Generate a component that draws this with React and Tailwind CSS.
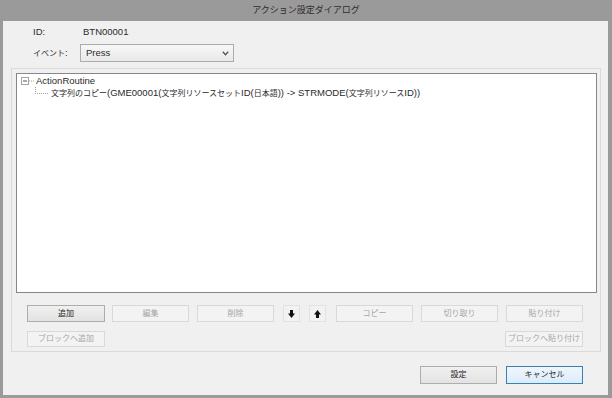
import React from "react";

const CJK = /([\u3000-\u30ff\u4e00-\u9fff\uff00-\uffef]+)/;

// mixed Latin / Japanese text: kana and kanji a touch smaller, as in the dialog font
function T({ s, j = "text-[8px]" }) {
  return s.split(CJK).map((p, i) =>
    CJK.test(p) ? (
      <span key={i} className={j}>
        {p}
      </span>
    ) : (
      <React.Fragment key={i}>{p}</React.Fragment>
    )
  );
}

function Btn({ label, w = "w-[77px]", h = "h-[17px]", enabled, className = "" }) {
  return (
    <div
      className={`${w} ${h} flex items-center justify-center border leading-none ${
        enabled
          ? "border-[#adadad] bg-gradient-to-b from-[#f0f0f0] to-[#e3e3e3] text-[#222]"
          : "border-[#d9d9d9] bg-[#f3f3f3] text-[#a6a6a6]"
      } ${className}`}
    >
      <T s={label} />
    </div>
  );
}

function ArrowBtn({ up, className = "" }) {
  return (
    <div className={`w-[17px] h-[17px] flex items-center justify-center border border-[#e2e2e2] bg-[#f2f2f2] ${className}`}>
      <svg width="7" height="8" viewBox="0 0 7 8" className={up ? "rotate-180" : ""}>
        <rect x="2" y="0" width="3" height="4" fill="#111" />
        <path d="M0 3.5 H7 L3.5 8 Z" fill="#111" />
      </svg>
    </div>
  );
}

export default function App() {
  return (
    <div className="w-[612px] h-[398px] bg-[#9a9a9a] flex flex-col overflow-hidden font-['Liberation_Sans','Noto_Sans_CJK_JP',sans-serif] text-[9.5px] text-[#2a2a2a]">
      {/* Title bar */}
      <div className="h-[21px] flex items-center justify-center text-[#2e2e2e]">
        <span className="text-[9px]">アクション設定ダイアログ</span>
      </div>

      <div className="flex-1 ml-[3px] mr-[4px] mb-[3px] bg-[#f0f0f0] flex flex-col pt-[3px]">
        {/* ID */}
        <div className="h-[16px] flex items-center pl-[30px]">
          <span className="w-[50px]">ID:</span>
          <span>BTN00001</span>
        </div>

        {/* Event */}
        <div className="h-[18px] mt-[4px] flex items-center pl-[30px]">
          <span className="w-[47px]">
            <T s="イベント:" />
          </span>
          <div className="w-[154px] h-[18px] border border-[#acacac] bg-gradient-to-b from-[#f7f7f7] to-[#e9e9e9] flex items-center justify-between pl-[5px] pr-[4px]">
            <span>Press</span>
            <svg width="7" height="5" viewBox="0 0 7 5">
              <path d="M0.8 0.8 L3.5 3.8 L6.2 0.8" fill="none" stroke="#555" strokeWidth="1.3" />
            </svg>
          </div>
        </div>

        {/* Routine panel */}
        <div className="mt-[6px] ml-[8px] w-[590px] border border-[#dadada] p-[4px] pb-[4px]">
          <div className="w-[581px] h-[220px] bg-white border border-[#828790] pl-[4px] pt-[1px]">
            <div className="h-[12px] flex items-center">
              <svg width="14" height="12" viewBox="0 0 14 12">
                <rect x="0.5" y="2.5" width="7" height="7" fill="#fff" stroke="#a5a5a5" />
                <path d="M2 6 H6" stroke="#555" />
                <path d="M8 6 H13" stroke="#a0a0a0" strokeDasharray="1 1" />
              </svg>
              <span className="ml-[1px]">ActionRoutine</span>
            </div>
            <div className="h-[12px] flex items-center pl-[13px]">
              <svg width="16" height="12" viewBox="0 0 16 12">
                <path d="M1.5 0 V6.5 H15" fill="none" stroke="#a0a0a0" strokeDasharray="1 1" />
              </svg>
              <span className="ml-[1px]">
                <T s="文字列のコピー(GME00001(文字列リソースセットID(日本語)) -> STRMODE(文字列リソースID))" />
              </span>
            </div>
          </div>

          <div className="w-[556px] ml-[11px] mt-[12px] flex items-center">
            <Btn label="追加" w="w-[78px]" enabled />
            <Btn label="編集" className="ml-[7px]" />
            <Btn label="削除" className="ml-[8px]" />
            <ArrowBtn className="ml-[9px]" />
            <ArrowBtn up className="ml-[9px]" />
            <Btn label="コピー" className="ml-[10px]" />
            <Btn label="切り取り" className="ml-[8px]" />
            <Btn label="貼り付け" className="ml-[8px]" />
          </div>
          <div className="w-[556px] ml-[11px] mt-[9px] flex items-center justify-between">
            <Btn label="ブロックへ追加" w="w-[78px]" h="h-[16px]" />
            <Btn label="ブロックへ貼り付け" w="w-[78px]" h="h-[16px]" />
          </div>
        </div>

        {/* Dialog buttons */}
        <div className="mt-[14px] flex justify-end pr-[25px] gap-[9px]">
          <Btn label="設定" h="h-[18px]" enabled />
          <div className="w-[77px] h-[18px] flex items-center justify-center border border-[#3c7fb1] bg-gradient-to-b from-[#eef6fc] to-[#dcecfc] leading-none">
            <T s="キャンセル" />
          </div>
        </div>
      </div>
    </div>
  );
}
